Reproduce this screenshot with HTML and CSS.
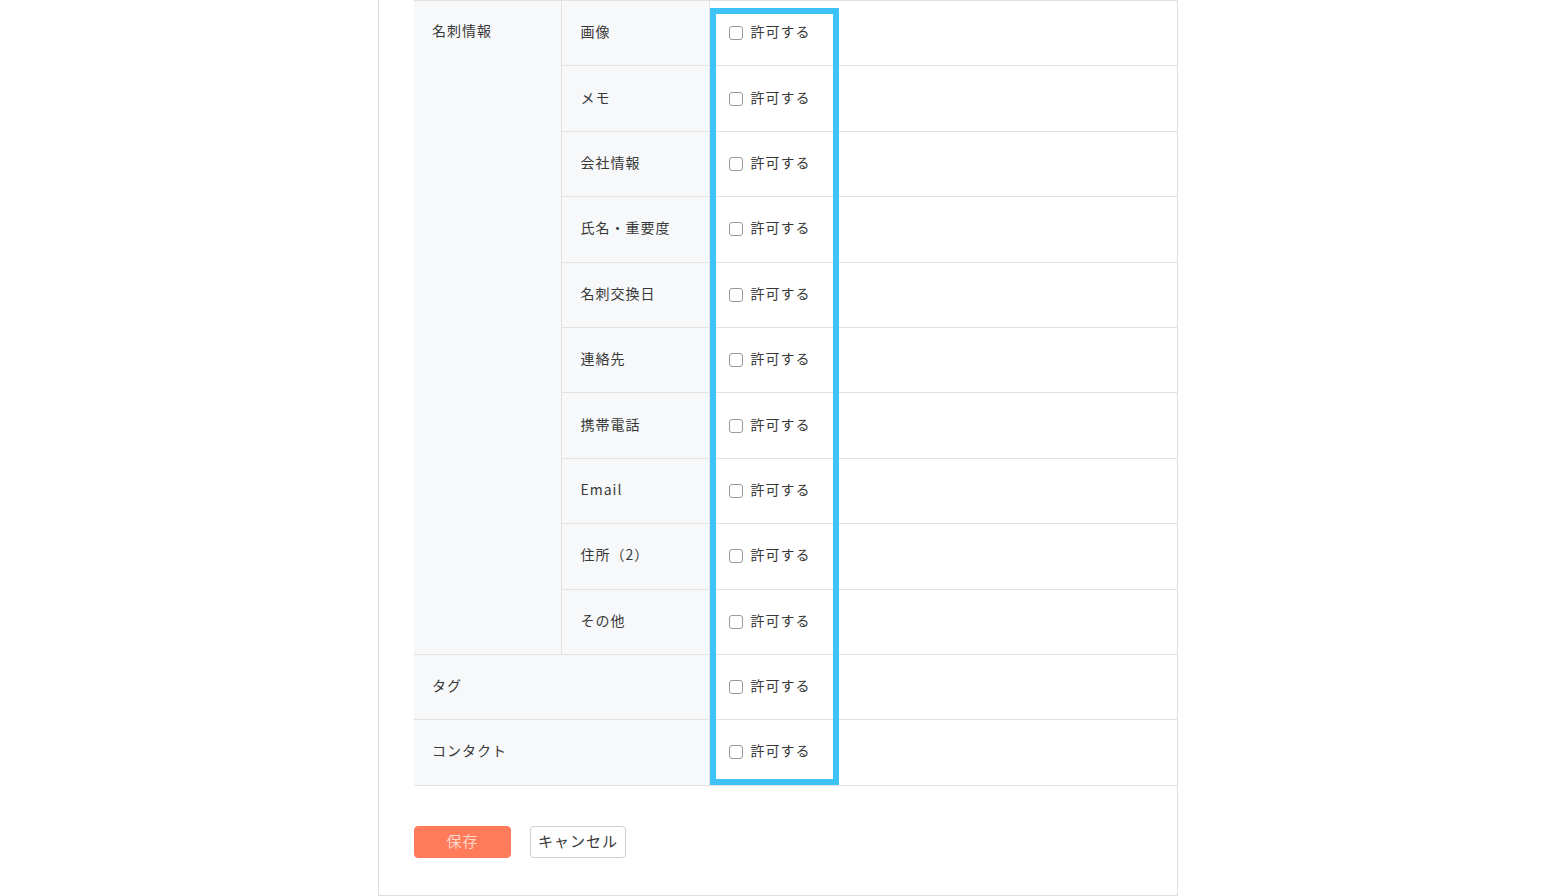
FILE: index.html
```html
<!DOCTYPE html>
<html lang="ja">
<head>
<meta charset="utf-8">
<title>権限設定</title>
<link rel="stylesheet" href="styles.css">
</head>
<body>
<div class="panel">
  <div class="table-wrap">
    <table class="perm">
      <colgroup>
        <col class="c1"><col class="c2"><col class="c3"><col class="c4">
      </colgroup>
      <tbody>
        <tr>
          <th class="group" rowspan="10">名刺情報</th>
          <th class="sub">画像</th>
          <td class="chk"><label><input type="checkbox"><span>許可する</span></label></td>
          <td class="rest"></td>
        </tr>
        <tr>
          <th class="sub">メモ</th>
          <td class="chk"><label><input type="checkbox"><span>許可する</span></label></td>
          <td class="rest"></td>
        </tr>
        <tr>
          <th class="sub">会社情報</th>
          <td class="chk"><label><input type="checkbox"><span>許可する</span></label></td>
          <td class="rest"></td>
        </tr>
        <tr>
          <th class="sub">氏名・重要度</th>
          <td class="chk"><label><input type="checkbox"><span>許可する</span></label></td>
          <td class="rest"></td>
        </tr>
        <tr>
          <th class="sub">名刺交換日</th>
          <td class="chk"><label><input type="checkbox"><span>許可する</span></label></td>
          <td class="rest"></td>
        </tr>
        <tr>
          <th class="sub">連絡先</th>
          <td class="chk"><label><input type="checkbox"><span>許可する</span></label></td>
          <td class="rest"></td>
        </tr>
        <tr>
          <th class="sub">携帯電話</th>
          <td class="chk"><label><input type="checkbox"><span>許可する</span></label></td>
          <td class="rest"></td>
        </tr>
        <tr>
          <th class="sub">Email</th>
          <td class="chk"><label><input type="checkbox"><span>許可する</span></label></td>
          <td class="rest"></td>
        </tr>
        <tr>
          <th class="sub">住所（2）</th>
          <td class="chk"><label><input type="checkbox"><span>許可する</span></label></td>
          <td class="rest"></td>
        </tr>
        <tr>
          <th class="sub">その他</th>
          <td class="chk"><label><input type="checkbox"><span>許可する</span></label></td>
          <td class="rest"></td>
        </tr>
        <tr>
          <th class="wide" colspan="2">タグ</th>
          <td class="chk"><label><input type="checkbox"><span>許可する</span></label></td>
          <td class="rest"></td>
        </tr>
        <tr>
          <th class="wide" colspan="2">コンタクト</th>
          <td class="chk"><label><input type="checkbox"><span>許可する</span></label></td>
          <td class="rest"></td>
        </tr>
      </tbody>
    </table>
    <div class="highlight"></div>
  </div>
  <div class="actions">
    <button class="btn btn-save" type="button">保存</button>
    <button class="btn btn-cancel" type="button">キャンセル</button>
  </div>
</div>
</body>
</html>
```

FILE: styles.css
```css
html, body {
  margin: 0;
  padding: 0;
  background: #ffffff;
}

body {
  font-family: "Noto Sans CJK JP", "Noto Sans", "Liberation Sans", sans-serif;
  font-size: 14px;
  color: #383838;
  letter-spacing: 1px;
}

.panel {
  box-sizing: border-box;
  width: 800px;
  margin: 0 auto;
  padding: 0 0 37px 35px;
  border-left: 1px solid #dedede;
  border-right: 1px solid #dedede;
  border-bottom: 2px solid #dedede;
}

.table-wrap {
  position: relative;
}

.perm {
  width: 100%;
  border-collapse: collapse;
  table-layout: fixed;
}

.c1 { width: 147px; }
.c2 { width: 148px; }
.c3 { width: 130px; }

.perm tr {
  height: 65.4px;
}

.perm th,
.perm td {
  border-top: 1px solid #e2e2e2;
  border-bottom: 1px solid #e2e2e2;
  padding: 0 0 0 18px;
  font-weight: normal;
  text-align: left;
  vertical-align: middle;
  line-height: 20px;
}

.perm th {
  background: #f7f8fa;
  color: #383838;
}

.perm .group {
  vertical-align: top;
  padding-top: 19px;
  border-right: 1px solid #e2e2e2;
}

.perm .sub {
  border-right: 1px solid #e2e2e2;
  padding-left: 19px;
  padding-bottom: 4px;
}

.perm .wide {
  border-right: 1px solid #e2e2e2;
  padding-bottom: 4px;
}

.perm .chk {
  padding-left: 19px;
  padding-bottom: 0;
}

.perm .rest {
  padding: 0;
}

.chk label {
  display: inline-flex;
  align-items: center;
  gap: 8px;
  color: #383838;
  white-space: nowrap;
}

.chk label span {
  position: relative;
  top: -1px;
}

.chk input {
  appearance: none;
  -webkit-appearance: none;
  box-sizing: border-box;
  width: 14px;
  height: 14px;
  margin: 2px 0 0 0;
  border: 1px solid #9a9a9a;
  border-radius: 3px;
  background: #fff;
}

.highlight {
  position: absolute;
  left: 296px;
  top: 8px;
  width: 129px;
  height: 777px;
  box-sizing: border-box;
  border: 6px solid #3fc2f6;
  pointer-events: none;
}

.actions {
  display: flex;
  gap: 19px;
  margin-top: 40px;
}

.btn {
  box-sizing: border-box;
  height: 32px;
  border-radius: 4px;
  font-family: inherit;
  font-size: 15px;
  letter-spacing: 1px;
  padding: 0 0 2px 0;
  cursor: pointer;
}

.btn-save {
  width: 97px;
  background: #ff7b5a;
  border: 1px solid #ff7b5a;
  color: #ffd6c9;
}

.btn-cancel {
  width: 96px;
  background: #ffffff;
  border: 1px solid #cfcfcf;
  color: #383838;
}
```
